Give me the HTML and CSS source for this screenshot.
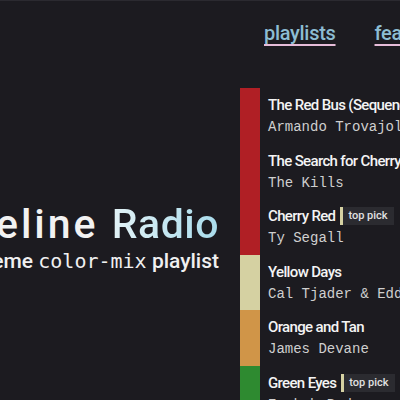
FILE: index.html
```html
<!DOCTYPE html>
<html>
<head>
<meta charset="utf-8">
<link rel="stylesheet" href="styles.css">
</head>
<body>
<div class="page">
  <div class="spacer"></div>
  <nav class="nav">
    <a class="nav-link" href="#">playlists</a>
    <a class="nav-link" href="#">featured</a>
  </nav>
  <div class="hero">
    <h1 class="title"><span class="lead">Timeline </span><span class="accent">Radio</span></h1>
    <p class="subtitle">An extreme <code class="mono">color-mix</code> playlist</p>
  </div>
  <ol class="list">
    <li class="track red"><div class="swatch"></div><div class="info"><div class="name">The Red Bus (Sequence 3)</div><div class="artist">Armando Trovajoli</div></div></li>
    <li class="track red"><div class="swatch"></div><div class="info"><div class="name">The Search for Cherry Red</div><div class="artist">The Kills</div></div></li>
    <li class="track red"><div class="swatch"></div><div class="info"><div class="name">Cherry Red <span class="badge">top pick</span></div><div class="artist">Ty Segall</div></div></li>
    <li class="track yellow"><div class="swatch"></div><div class="info"><div class="name">Yellow Days</div><div class="artist">Cal Tjader &amp; Eddie Palmieri</div></div></li>
    <li class="track orange"><div class="swatch"></div><div class="info"><div class="name">Orange and Tan</div><div class="artist">James Devane</div></div></li>
    <li class="track green"><div class="swatch"></div><div class="info"><div class="name">Green Eyes <span class="badge">top pick</span></div><div class="artist">Erykah Badu</div></div></li>
  </ol>
</div>
</body>
</html>
```
FILE: styles.css
```css
html, body {
  margin: 0;
  padding: 0;
  background: #1c1b20;
  overflow: hidden;
}
body {
  border-top: 1px solid #2b2a30;
  height: 400px;
  box-sizing: border-box;
}
.page {
  display: grid;
  grid-template-columns: 240px 1fr;
  grid-template-rows: 87px auto;
}
.nav {
  display: flex;
  gap: 39px;
  padding: 20px 0 0 24px;
  white-space: nowrap;
}
.nav-link {
  font-family: Roboto, sans-serif;
  font-weight: 500;
  font-size: 20px;
  letter-spacing: -0.3px;
  color: #8dbdd2;
  text-decoration: underline;
  text-decoration-color: #e6bcd8;
  text-decoration-thickness: 2px;
  text-underline-offset: 4px;
}
.hero {
  display: flex;
  flex-direction: column;
  align-items: flex-end;
  padding: 113px 21px 0 0;
  white-space: nowrap;
}
.title {
  margin: 0;
  font-family: Roboto, sans-serif;
  font-weight: 500;
  font-size: 41px;
  letter-spacing: 0.5px;
  line-height: 46px;
  color: #f2f2f2;
}
.lead {
  letter-spacing: 3px;
}
.accent {
  background: linear-gradient(90deg, #e2f2f6, #a9dcec);
  -webkit-background-clip: text;
  background-clip: text;
  color: transparent;
}
.subtitle {
  margin: 0;
  font-family: Roboto, sans-serif;
  font-weight: 500;
  font-size: 21px;
  line-height: 28px;
  color: #f0f0f0;
}
.mono {
  font-family: "DejaVu Sans Mono", monospace;
  font-weight: 400;
  font-size: 20px;
}
.list {
  list-style: none;
  margin: 0;
  padding: 0;
  white-space: nowrap;
}
.track {
  display: flex;
  height: 55.5px;
}
.swatch {
  width: 20px;
  flex: none;
}
.red .swatch { background: #b01f25; }
.yellow .swatch { background: #d5d1a2; }
.orange .swatch { background: #d09548; }
.green .swatch { background: #2e8a30; }
.info {
  padding: 7px 0 0 8px;
}
.name {
  display: flex;
  align-items: center;
  gap: 5px;
  font-family: Roboto, sans-serif;
  font-weight: 500;
  font-size: 15px;
  letter-spacing: -0.65px;
  line-height: 20px;
  color: #f4f4f4;
}
.badge {
  font-size: 11px;
  letter-spacing: 0;
  line-height: 18px;
  padding: 0 6px 0 5px;
  background: #2b2b30;
  border-left: 3px solid #d5d1a2;
  color: #e0e0e0;
}
.artist {
  margin-top: 3px;
  font-family: "Liberation Mono", monospace;
  font-size: 14px;
  line-height: 18px;
  color: #cfcfcf;
}
```
